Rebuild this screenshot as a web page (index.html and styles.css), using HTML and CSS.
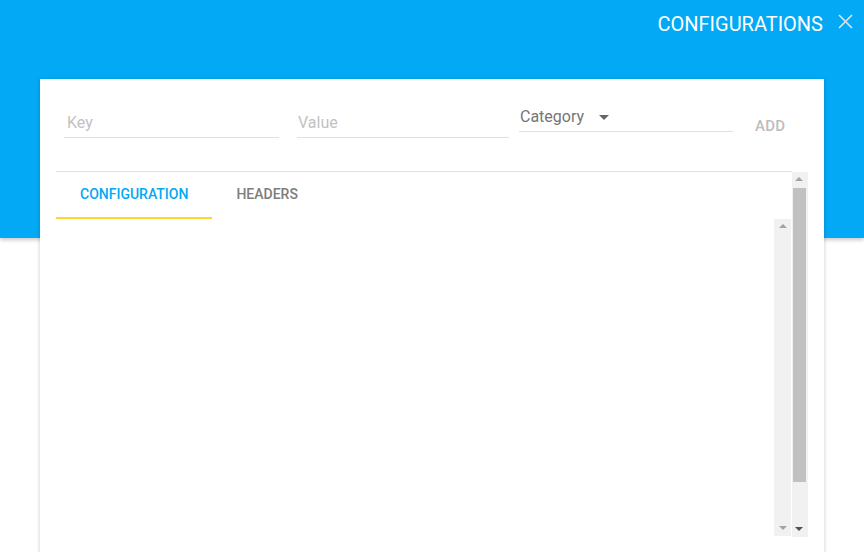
FILE: index.html
```html
<!DOCTYPE html>
<html>
<head>
<meta charset="utf-8">
<link rel="stylesheet" href="styles.css">
</head>
<body>
<header class="topbar">
  <h1 class="title">CONFIGURATIONS</h1>
  <button class="close" aria-label="Close">
    <svg width="15" height="15" viewBox="0 0 15 15"><path d="M1 1L14 14M14 1L1 14" stroke="#e3e3e3" stroke-width="1.6" fill="none"/></svg>
  </button>
</header>
<main class="card">
  <div class="form-row">
    <div class="field field-key"><span class="placeholder">Key</span></div>
    <div class="field field-value"><span class="placeholder">Value</span></div>
    <div class="field field-cat"><span class="select-label">Category</span><span class="caret"></span></div>
    <div class="add">ADD</div>
  </div>
  <section class="lower">
    <div class="pane">
      <nav class="tabs">
        <div class="tab active">CONFIGURATION</div>
        <div class="tab">HEADERS</div>
      </nav>
      <div class="content">
        <div class="content-body"></div>
        <div class="sb inner-sb">
          <span class="arr up light"></span>
          <span class="arr down light"></span>
        </div>
      </div>
    </div>
    <div class="sb outer-sb">
      <span class="arr up light"></span>
      <div class="thumb"></div>
      <span class="arr down dark"></span>
    </div>
  </section>
</main>
</body>
</html>
```
FILE: styles.css
```css
html, body {
  margin: 0;
  padding: 0;
  overflow: hidden;
  background: #ffffff;
  font-family: Roboto, "Liberation Sans", Arial, sans-serif;
}
.topbar {
  height: 238px;
  background: #03a9f4;
  box-shadow: 0 2px 4px rgba(0, 0, 0, 0.22);
  display: flex;
  justify-content: flex-end;
  align-items: flex-start;
  padding-right: 11px;
  box-sizing: border-box;
}
.title {
  margin: 12px 0 0 0;
  font-size: 20px;
  font-weight: 400;
  line-height: 24px;
  color: #ffffff;
}
.close {
  margin: 14px 0 0 15px;
  padding: 0;
  border: 0;
  background: none;
  width: 15px;
  height: 15px;
  display: block;
}
.close svg { display: block; }
.card {
  position: relative;
  margin: -159px 40px 0 40px;
  height: 480px;
  background: #ffffff;
  box-shadow: 0 1px 4px rgba(0, 0, 0, 0.22);
  padding: 22px 0 0 0;
  box-sizing: border-box;
}
.form-row {
  display: flex;
  align-items: flex-start;
  padding-left: 24px;
  height: 48px;
}
.field {
  height: 30px;
  border-bottom: 1px solid #e0e0e0;
  box-sizing: content-box;
  display: flex;
  align-items: center;
  font-size: 16px;
}
.field-key { width: 215px; margin-top: 6px; }
.field-value { width: 212px; margin-top: 6px; margin-left: 18px; }
.field-cat { width: 214px; margin-left: 10px; }
.placeholder {
  color: #c2c2c2;
  padding-left: 3px;
}
.field-value .placeholder { padding-left: 1px; }
.select-label {
  color: #757575;
  padding-left: 1px;
}
.caret {
  width: 0;
  height: 0;
  border-left: 5.5px solid transparent;
  border-right: 5.5px solid transparent;
  border-top: 5.5px solid #666666;
  margin-left: 15px;
  margin-top: 2px;
}
.add {
  margin-left: 22px;
  margin-top: 15px;
  font-size: 15px;
  line-height: 20px;
  color: #bdbdbd;
  font-weight: 500;
  letter-spacing: 0.2px;
}
.lower {
  display: flex;
  margin: 22px 0 0 16px;
  height: 365px;
}
.pane {
  width: 736px;
  border-top: 1px solid #e0e0e0;
  display: flex;
  flex-direction: column;
}
.tabs {
  display: flex;
  height: 47px;
}
.tab {
  position: relative;
  font-size: 14px;
  font-weight: 500;
  line-height: 20px;
  padding: 12px 24px 0 24px;
  color: #7d7d7d;
  box-sizing: border-box;
}
.tab.active { color: #03a9f4; }
.tab.active::after {
  content: "";
  position: absolute;
  left: 0;
  right: 0;
  bottom: 0;
  height: 2px;
  background: #fdd835;
}
.content {
  display: flex;
  height: 318px;
}
.content-body { flex: 1; }
.sb {
  position: relative;
  background: #f1f1f1;
}
.inner-sb {
  width: 17px;
  margin-right: 1px;
}
.outer-sb {
  width: 16px;
  height: 365px;
  margin-top: 1px;
}
.thumb {
  position: absolute;
  left: 1px;
  right: 2px;
  top: 16px;
  height: 294px;
  background: #c1c1c1;
}
.arr {
  position: absolute;
  left: 50%;
  width: 0;
  height: 0;
  margin-left: -4px;
  border-left: 4px solid transparent;
  border-right: 4px solid transparent;
}
.arr.up { top: 5px; border-bottom: 4px solid #a3a3a3; }
.arr.down { bottom: 6px; border-top: 4px solid #a3a3a3; }
.arr.down.dark { border-top-color: #505050; }
.outer-sb .arr { margin-left: -5px; }
```
